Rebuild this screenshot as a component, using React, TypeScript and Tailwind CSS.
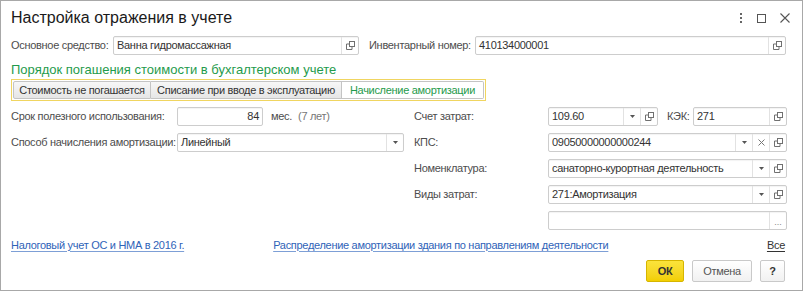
import React from "react";

type Btn = "drop" | "clear" | "copy" | "dots";

function CopyIcon() {
  return (
    <svg width="9" height="9" viewBox="0 0 9 9" fill="none" stroke="#707070" strokeWidth="1">
      <rect x="3.5" y="0.5" width="5" height="5" />
      <path d="M3.5 3H0.5V8.5H6V5.5" />
    </svg>
  );
}

function DropIcon() {
  return (
    <svg width="5" height="3" viewBox="0 0 5 3">
      <path d="M0 0H5L2.5 3Z" fill="#555" />
    </svg>
  );
}

function ClearIcon() {
  return (
    <svg width="7" height="7" viewBox="0 0 7 7" stroke="#777" strokeWidth="1">
      <path d="M0.5 0.5L6.5 6.5M6.5 0.5L0.5 6.5" />
    </svg>
  );
}

const small = "text-[11px] tracking-[-0.3px]";

function Field({
  w,
  value = "",
  btns = [],
  right = false,
}: {
  w: string;
  value?: string;
  btns?: Btn[];
  right?: boolean;
}) {
  return (
    <div
      className={`${w} h-[19px] shrink-0 flex items-stretch border border-[#cdcdcd] rounded-[2px] bg-white shadow-[inset_0_1px_1px_rgba(0,0,0,0.05)]`}
    >
      <div
        className={`flex-1 min-w-0 overflow-hidden whitespace-nowrap flex items-center px-[3px] ${small} text-[#333] ${right ? "justify-end" : ""}`}
      >
        {value}
      </div>
      {btns.map((b, i) => (
        <div key={i} className="w-[17px] flex items-center justify-center border-l border-[#e2e2e2]">
          {b === "drop" && <DropIcon />}
          {b === "clear" && <ClearIcon />}
          {b === "copy" && <CopyIcon />}
          {b === "dots" && <span className="text-[9px] text-[#888] leading-none mt-[4px]">...</span>}
        </div>
      ))}
    </div>
  );
}

function Label({ children, w }: { children: React.ReactNode; w: string }) {
  return <div className={`${w} shrink-0 ${small} text-[#4d4d4d] whitespace-nowrap`}>{children}</div>;
}

export default function App() {
  return (
    <div
      className="w-[803px] h-[291px] bg-white border border-[#a8a8a8] overflow-hidden flex flex-col"
      style={{ fontFamily: '"Liberation Sans", Arial, sans-serif' }}
    >
      {/* Header */}
      <div className="h-[35px] flex items-start pl-[10px] pr-[10px] pt-[7px]">
        <div className="flex-1 text-[16px] text-[#1a1a1a] leading-[20px]">Настройка отражения в учете</div>
        <div className="flex items-center gap-[14px] pt-[5px] pr-[2px]">
          <svg width="4" height="10" viewBox="0 0 4 10">
            <rect x="1" y="0" width="2" height="2" fill="#666" />
            <rect x="1" y="4" width="2" height="2" fill="#666" />
            <rect x="1" y="8" width="2" height="2" fill="#666" />
          </svg>
          <svg width="9" height="9" viewBox="0 0 9 9" fill="none" stroke="#555" strokeWidth="1">
            <rect x="0.5" y="0.5" width="8" height="8" />
          </svg>
          <svg width="10" height="10" viewBox="0 0 10 10" stroke="#555" strokeWidth="1.1">
            <path d="M0.5 0.5L9.5 9.5M9.5 0.5L0.5 9.5" />
          </svg>
        </div>
      </div>

      {/* Row 1 */}
      <div className="flex items-center pl-[10px] h-[19px]">
        <Label w="w-[102px]">Основное средство:</Label>
        <Field w="w-[246px]" value="Ванна гидромассажная" btns={["copy"]} />
        <div className="w-[10px]" />
        <Label w="w-[106px]">Инвентарный номер:</Label>
        <Field w="w-[311px]" value="410134000001" btns={["copy"]} />
      </div>

      {/* Section heading */}
      <div className="pl-[10px] mt-[6px] h-[17px] flex items-center text-[13px] text-[#1f9b4c] whitespace-nowrap">
        Порядок погашения стоимости в бухгалтерском учете
      </div>

      {/* Tabs */}
      <div className="ml-[10px] mt-[1px] w-[475px] h-[22px] border border-[#f0d560] flex p-[1px]">
        <div className={`w-[138px] whitespace-nowrap flex items-center justify-center ${small} text-[#333] bg-gradient-to-b from-[#f7f7f7] to-[#e6e6e6] border border-[#c4c4c4] rounded-l-[2px]`}>
          Стоимость не погашается
        </div>
        <div className={`w-[191px] whitespace-nowrap flex items-center justify-center ${small} text-[#333] bg-gradient-to-b from-[#f7f7f7] to-[#e6e6e6] border-y border-r border-[#c4c4c4]`}>
          Списание при вводе в эксплуатацию
        </div>
        <div className={`flex-1 whitespace-nowrap flex items-center justify-center ${small} text-[#1f9b4c] bg-white border-y border-r border-[#c4c4c4] rounded-r-[2px]`}>
          Начисление амортизации
        </div>
      </div>

      {/* Two columns */}
      <div className="flex mt-[6px] pl-[10px]">
        <div className="w-[393px] flex flex-col gap-[7px]">
          <div className="flex items-center h-[19px]">
            <Label w="w-[166px]">Срок полезного использования:</Label>
            <Field w="w-[86px]" value="84" right />
            <span className={`ml-[8px] ${small} text-[#4d4d4d]`}>мес.</span>
            <span className={`ml-[6px] ${small} text-[#777]`}>(7 лет)</span>
          </div>
          <div className="flex items-center h-[19px]">
            <Label w="w-[166px]">Способ начисления амортизации:</Label>
            <Field w="w-[227px]" value="Линейный" btns={["drop"]} />
          </div>
        </div>
        <div className="ml-[10px] w-[373px] flex flex-col gap-[7px]">
          <div className="flex items-center h-[19px]">
            <Label w="w-[134px]">Счет затрат:</Label>
            <Field w="w-[110px]" value="109.60" btns={["drop", "copy"]} />
            <Label w="w-[35px] pl-[9px]">КЭК:</Label>
            <Field w="w-[94px]" value="271" btns={["copy"]} />
          </div>
          <div className="flex items-center h-[19px]">
            <Label w="w-[134px]">КПС:</Label>
            <Field w="w-[239px]" value="09050000000000244" btns={["drop", "clear", "copy"]} />
          </div>
          <div className="flex items-center h-[19px]">
            <Label w="w-[134px]">Номенклатура:</Label>
            <Field w="w-[239px]" value="санаторно-курортная деятельность" btns={["drop", "copy"]} />
          </div>
          <div className="flex items-center h-[19px]">
            <Label w="w-[134px]">Виды затрат:</Label>
            <Field w="w-[239px]" value="271:Амортизация" btns={["drop", "copy"]} />
          </div>
          <div className="flex items-center h-[19px]">
            <div className="w-[134px] shrink-0" />
            <Field w="w-[239px]" value="" btns={["dots"]} />
          </div>
        </div>
      </div>

      {/* Links */}
      <div className={`flex items-center pl-[10px] pr-[17px] mt-[7px] h-[16px] ${small}`}>
        <a className="text-[#2f63b8] underline underline-offset-2 decoration-[#7d9fd6] whitespace-nowrap">Налоговый учет ОС и НМА в 2016 г.</a>
        <a className="ml-[89px] text-[#2f63b8] underline underline-offset-2 decoration-[#7d9fd6] whitespace-nowrap">
          Распределение амортизации здания по направлениям деятельности
        </a>
        <div className="flex-1" />
        <a className="text-[#333] underline underline-offset-2 whitespace-nowrap">Все</a>
      </div>

      {/* Buttons */}
      <div className="flex justify-end items-center gap-[8px] pr-[17px] mt-[7px]">
        <div className={`w-[38px] h-[22px] flex items-center justify-center ${small} font-bold text-[#333] bg-gradient-to-b from-[#fbe33a] to-[#f2cf00] border border-[#d6b500] rounded-[2px]`}>
          ОК
        </div>
        <div className={`w-[60px] h-[22px] flex items-center justify-center ${small} text-[#555] bg-gradient-to-b from-white to-[#f1f1f1] border border-[#c9c9c9] rounded-[2px]`}>
          Отмена
        </div>
        <div className={`w-[25px] h-[22px] flex items-center justify-center ${small} font-bold text-[#333] bg-gradient-to-b from-white to-[#f1f1f1] border border-[#c9c9c9] rounded-[2px]`}>
          ?
        </div>
      </div>
    </div>
  );
}
